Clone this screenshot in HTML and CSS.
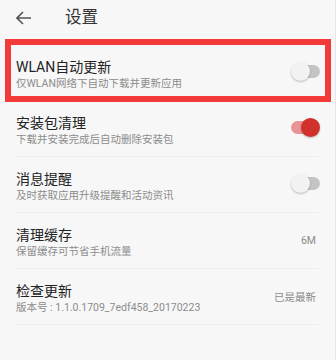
FILE: index.html
```html
<!DOCTYPE html>
<html lang="zh">
<head>
<meta charset="utf-8">
<link rel="stylesheet" href="styles.css">
</head>
<body>
<div class="page">
  <header class="header">
    <svg class="back" width="16" height="14" viewBox="0 0 16 14" aria-hidden="true">
      <path d="M15 7H1.5M7 1L1 7l6 6" fill="none" stroke="#555" stroke-width="1.6"/>
    </svg>
    <span class="title">设置</span>
  </header>
  <ul class="list">
    <li class="row highlighted">
      <div class="text">
        <div class="name">WLAN自动更新</div>
        <div class="desc">仅WLAN网络下自动下载并更新应用</div>
      </div>
      <span class="switch"><span class="knob"></span></span>
    </li>
    <li class="row">
      <div class="text">
        <div class="name">安装包清理</div>
        <div class="desc">下载并安装完成后自动删除安装包</div>
      </div>
      <span class="switch on"><span class="knob"></span></span>
    </li>
    <li class="row">
      <div class="text">
        <div class="name">消息提醒</div>
        <div class="desc">及时获取应用升级提醒和活动资讯</div>
      </div>
      <span class="switch"><span class="knob"></span></span>
    </li>
    <li class="row">
      <div class="text">
        <div class="name">清理缓存</div>
        <div class="desc">保留缓存可节省手机流量</div>
      </div>
      <span class="value">6M</span>
    </li>
    <li class="row">
      <div class="text">
        <div class="name">检查更新</div>
        <div class="desc">版本号 : 1.1.0.1709_7edf458_20170223</div>
      </div>
      <span class="value">已是最新</span>
    </li>
  </ul>
</div>
</body>
</html>
```
FILE: styles.css
```css
* { box-sizing: border-box; }
html, body {
  margin: 0;
  padding: 0;
  background: #f7f7f7;
}
body {
  font-family: Roboto, "Noto Sans CJK SC", sans-serif;
  color: #222;
  width: 336px;
  height: 360px;
  overflow: hidden;
}
.page {
  width: 336px;
  height: 360px;
  border-right: 1px solid #e6e6e6;
}
.header {
  height: 36px;
  display: flex;
  align-items: center;
  padding-left: 16px;
}
.back { display: block; }
.title {
  margin-left: 33px;
  font-size: 16.5px;
  color: #333;
  line-height: 20px;
}
.list {
  list-style: none;
  margin: 9px 0 0;
  padding: 0;
}
.row {
  position: relative;
  height: 56px;
  margin: 0 16px;
  padding: 13px 0 10px;
  display: flex;
  align-items: flex-start;
  justify-content: space-between;
  border-bottom: 1px solid #efefef;
}
.text { display: flex; flex-direction: column; }
.name {
  font-size: 14px;
  line-height: 18px;
  color: #222;
}
.desc {
  margin-top: 1px;
  font-size: 10.5px;
  line-height: 14px;
  color: #8c8c8c;
}
.value {
  align-self: center;
  margin-right: 3px;
  margin-top: -4px;
  font-size: 10.5px;
  color: #8a8a8a;
}
.switch {
  align-self: center;
  margin-top: -6px;
  position: relative;
  width: 29px;
  height: 19px;
  margin-right: -1px;
}
.switch::before {
  content: "";
  position: absolute;
  left: 3px;
  right: 0;
  top: 3px;
  height: 13px;
  border-radius: 7px;
  background: #c4c4c4;
}
.switch .knob {
  position: absolute;
  left: 0;
  top: 0;
  width: 19px;
  height: 19px;
  border-radius: 50%;
  background: #f2f2f2;
  box-shadow: 0 1px 2px rgba(0,0,0,0.25);
}
.switch.on::before { background: #e99494; left: 0; right: 3px; }
.switch.on .knob {
  left: auto;
  right: 0;
  background: #d0322b;
}
.highlighted::after {
  content: "";
  position: absolute;
  left: -11px;
  right: -12px;
  top: -6px;
  bottom: -2px;
  border: 6px solid #f23a3a;
}
```
